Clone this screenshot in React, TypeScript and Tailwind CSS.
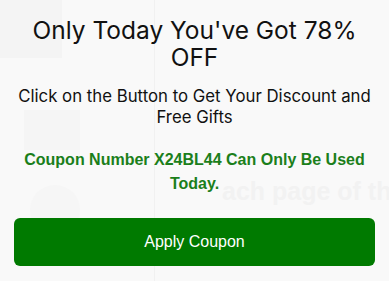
import React from 'react';

export default function App() {
  return (
    <div className="relative w-[389px] h-[281px] overflow-hidden bg-[#f9f9f9]">
      {/* faded page behind the popup */}
      <div className="absolute inset-0 pointer-events-none">
        <div className="absolute left-0 top-0 w-[62px] h-[58px] bg-[#f4f4f4]" />
        <div className="absolute left-[64px] top-0 w-[91px] h-[281px] border-r border-[#f1f1f1]" />
        <div className="absolute left-[24px] top-[110px] w-[56px] h-[40px] bg-[#f5f5f5]" />
        <div className="absolute left-[30px] top-[185px] w-[50px] h-[50px] rounded-full bg-[#f6f6f6]" />
        <div className="absolute left-[222px] top-[176px] text-[25px] leading-[30px] font-bold text-[#f2f2f2] whitespace-nowrap font-['Liberation_Sans',sans-serif]">
          ach page of th
        </div>
      </div>

      <div className="relative flex flex-col items-center px-[14px] pt-[17px]">
        <h1 className="text-center text-[24.5px] leading-[27px] text-[#111] font-['Inter',sans-serif] font-normal">
          Only Today You've Got 78%
          <br />
          OFF
        </h1>
        <p className="mt-[15px] text-center text-[16.8px] leading-[21px] text-[#111] font-['Inter',sans-serif]">
          Click on the Button to Get Your Discount and Free Gifts
        </p>
        <p className="mt-[20px] px-[6px] text-center text-[16px] leading-[24px] font-bold text-[#1b7f1b] font-['Liberation_Sans',sans-serif]">
          Coupon Number X24BL44 Can Only Be Used Today.
        </p>
        <button className="mt-[22px] w-full h-[48px] rounded-[6px] bg-[#007a00] text-white text-[16px] font-['Liberation_Sans',sans-serif]">
          Apply Coupon
        </button>
      </div>
    </div>
  );
}
